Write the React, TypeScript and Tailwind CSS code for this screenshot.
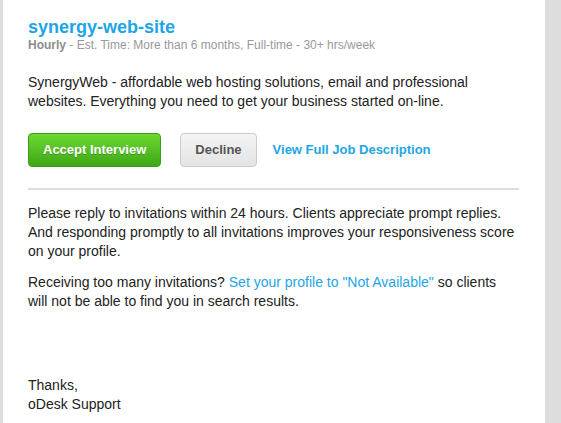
import React from "react";

export default function App() {
  return (
    <div
      className="flex h-[423px] w-[561px] bg-[#dddddd] overflow-hidden"
      style={{ fontFamily: '"Liberation Sans", Arial, sans-serif' }}
    >
      <div className="w-[3px] shrink-0" />
      <div className="w-[542px] shrink-0 bg-white pl-[25px]">
        <div className="w-[491px]">
          <h1 className="mt-[16px] text-[18px] font-bold leading-[22px] text-[#1ea5e6]">
            synergy-web-site
          </h1>
          <div className="text-[12px] leading-[14px] text-[#999999]">
            <span className="font-bold text-[#8c8c8c]">Hourly</span> - Est. Time: More than 6 months, Full-time - 30+ hrs/week
          </div>
          <p className="mt-[21px] text-[14px] leading-[19px] text-[#222222]">
            SynergyWeb - affordable web hosting solutions, email and professional websites. Everything you need to get your business started on-line.
          </p>
          <div className="mt-[22px] flex items-center">
            <button className="h-[34px] rounded-[4px] border border-[#3b9c17] bg-gradient-to-b from-[#6cd92f] to-[#3ea718] px-[14px] text-[13px] font-bold text-white [text-shadow:0_1px_0_rgba(0,0,0,0.25)]">
              Accept Interview
            </button>
            <button className="ml-[19px] h-[34px] rounded-[4px] border border-[#cccccc] bg-gradient-to-b from-[#f4f4f4] to-[#e4e4e4] px-[14px] text-[13px] font-bold text-[#555555]">
              Decline
            </button>
            <a className="ml-[16px] text-[13px] font-bold text-[#1ea5e6]">View Full Job Description</a>
          </div>
          <div className="mt-[21px] h-[2px] bg-[#dddddd]" />
          <p className="mt-[14px] text-[14px] leading-[19px] text-[#222222]">
            Please reply to invitations within 24 hours. Clients appreciate prompt replies. And responding promptly to all invitations improves your responsiveness score on your profile.
          </p>
          <p className="mt-[12px] text-[14px] leading-[19px] text-[#222222]">
            Receiving too many invitations?{" "}
            <a className="text-[#1ea5e6]">Set your profile to "Not Available"</a> so clients will not be able to find you in search results.
          </p>
          <p className="mt-[65px] text-[14px] leading-[19px] text-[#222222]">
            Thanks,
            <br />
            oDesk Support
          </p>
        </div>
      </div>
    </div>
  );
}
